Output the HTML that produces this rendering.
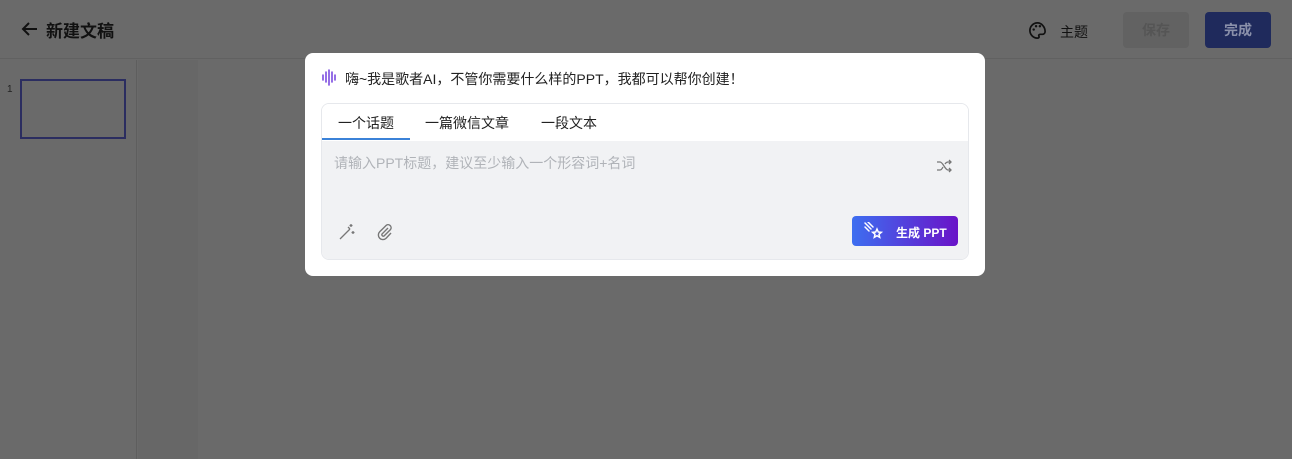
<!DOCTYPE html>
<html><head><meta charset="utf-8"><style>
*{margin:0;padding:0;box-sizing:border-box}
body{width:1292px;height:459px;overflow:hidden;background:#6a6a6a;font-family:"Liberation Sans","Noto Sans CJK SC",sans-serif;position:relative}
.hdr{position:absolute;left:0;top:0;width:1292px;height:59px;background:#6a6a6a;border-bottom:1px solid #616161}
.side{position:absolute;left:0;top:60px;width:137px;height:399px;background:#6a6a6a;border-right:1px solid #5e5e5e}
.mid{position:absolute;left:138px;top:60px;width:60px;height:399px;background:#676767}
.main{position:absolute;left:198px;top:60px;width:1094px;height:399px;background:#6a6a6a}
.modal{position:absolute;left:305px;top:53px;width:680px;height:223px;background:#fff;border-radius:8px}
</style></head><body>
<div class="hdr">
 <svg style="position:absolute;left:21px;top:21px" width="17" height="16" viewBox="0 0 17 16"><path d="M16 8H2M8 2L2 8l6 6" stroke="#111" stroke-width="2" fill="none"/></svg>
 <div style="position:absolute;left:46px;top:17px;font-size:17px;font-weight:bold;color:#111">新建文稿</div>
 <svg style="position:absolute;left:1028px;top:21px" width="19" height="19" viewBox="0 0 20 20"><path d="M10 2a8 8 0 0 0 0 16c1.5 0 2-1 1.5-2s0-2 1.5-2h2a3 3 0 0 0 3-3c0-5-4-9-8-9z" stroke="#111" stroke-width="1.8" fill="none"/><circle cx="6" cy="9" r="1.3" fill="#111"/><circle cx="8.5" cy="5.5" r="1.3" fill="#111"/><circle cx="12.5" cy="5.5" r="1.3" fill="#111"/></svg>
 <div style="position:absolute;left:1060px;top:22px;font-size:14px;color:#111">主题</div>
 <div style="position:absolute;left:1123px;top:12px;width:66px;height:36px;border-radius:4px;background:#626262;color:#555;font-size:14px;font-weight:bold;text-align:center;line-height:36px">保存</div>
 <div style="position:absolute;left:1205px;top:12px;width:66px;height:36px;border-radius:4px;background:#1f2a5c;color:#8a90aa;font-size:14px;font-weight:bold;text-align:center;line-height:36px">完成</div>
</div>
<div class="side">
 <div style="position:absolute;left:7px;top:24px;font-size:10px;color:#222">1</div>
 <div style="position:absolute;left:20px;top:19px;width:106px;height:60px;border:2px solid #2b2d60"></div>
</div>
<div class="mid"></div><div class="main"></div>
<div class="modal">
 <svg style="position:absolute;left:16px;top:16px" width="16" height="18" viewBox="0 0 16 18"><g stroke="#7b4be0" stroke-width="1.6" fill="none" stroke-linecap="round"><path d="M2 6v5M5 3v10M8 1v15M11 3v10M14 6v5"/></g></svg>
 <div style="position:absolute;left:40px;top:16px;font-size:14px;color:#222">嗨~我是歌者AI，不管你需要什么样的PPT，我都可以帮你创建！</div>
 <div style="position:absolute;left:16px;top:50px;width:648px;height:157px;border:1px solid #e6e8ec;border-radius:8px;overflow:hidden">
  <div style="height:37px;background:#fff;position:relative;font-size:14px;color:#222">
   <span style="position:absolute;left:16px;top:9px">一个话题</span>
   <span style="position:absolute;left:103px;top:9px">一篇微信文章</span>
   <span style="position:absolute;left:219px;top:9px">一段文本</span>
   <div style="position:absolute;left:0;top:34px;width:88px;height:2px;background:#3b82d8"></div>
  </div>
  <div style="height:120px;background:#f1f2f4;position:relative">
   <div style="position:absolute;left:12px;top:12px;font-size:14px;color:#b0b3b8">请输入PPT标题，建议至少输入一个形容词+名词</div>
   <svg style="position:absolute;left:614px;top:18px" width="16" height="14" viewBox="0 0 16 14"><g stroke="#777" stroke-width="1.3" fill="none"><path d="M1 3h3c3 0 5 8 8 8h3M1 11h3c1.5 0 2.5-2 3-3M9 5c.8-1.2 1.8-2 3-2h3M13 1l2 2-2 2M13 9l2 2-2 2"/></g></svg>
   <svg style="position:absolute;left:16px;top:82px" width="18" height="18" viewBox="0 0 18 18"><g stroke="#777" stroke-width="1.3" fill="none"><path d="M2 16L12 6M10 4l2 2M13 1v3M11.5 2.5h3M15 8v3M13.5 9.5h3"/></g></svg>
   <svg style="position:absolute;left:54px;top:82px" width="18" height="18" viewBox="0 0 18 18"><path d="M12 5l-6 6a1.5 1.5 0 0 0 2 2l6.5-6.5a3 3 0 0 0-4.2-4.2L3.7 8.8a4.5 4.5 0 0 0 6.4 6.4L15 10" stroke="#777" stroke-width="1.4" fill="none"/></svg>
   <div style="position:absolute;left:530px;top:75px;width:106px;height:30px;border-radius:4px;background:linear-gradient(90deg,#3d6ef0,#6a13c8);color:#fff;font-size:12px;font-weight:bold">
    <svg style="position:absolute;left:12px;top:6px" width="20" height="18" viewBox="0 0 20 18"><g stroke="#fff" stroke-width="1.5" fill="none" stroke-linecap="round"><path d="M1 1l6 6M4 0l5 5M1 5l4 4"/><path d="M13 7l1.3 3 3 .3-2.3 2 .7 3-2.7-1.6-2.7 1.6.7-3-2.3-2 3-.3z"/></g></svg>
    <span style="position:absolute;left:44px;top:8px">生成 PPT</span>
   </div>
  </div>
 </div>
</div>
</body></html>
